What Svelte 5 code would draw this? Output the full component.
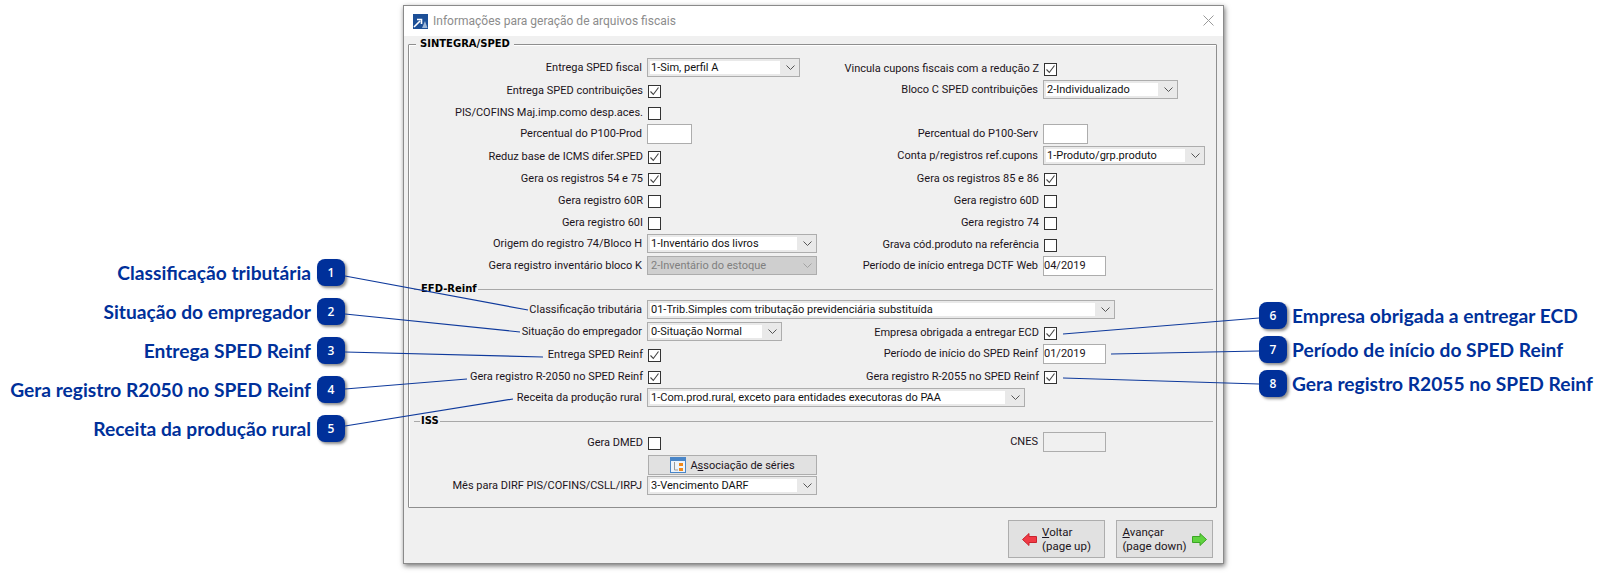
<script lang="ts">
	type Field =
		| { type: 'blank' }
		| { type: 'check'; label: string; checked?: boolean }
		| { type: 'select'; label: string; value: string; width: number; disabled?: boolean; wide?: boolean }
		| { type: 'input'; label: string; value?: string; width: number; off?: boolean };

	const blank: Field = { type: 'blank' };
	const check = (label: string, checked = false): Field => ({ type: 'check', label, checked });
	const select = (label: string, value: string, width: number, extra = {}): Field => ({
		type: 'select',
		label,
		value,
		width,
		...extra
	});
	const input = (label: string, width: number, value = '', off = false): Field => ({
		type: 'input',
		label,
		width,
		value,
		off
	});

	const sintegra: [Field, Field][] = [
		[select('Entrega SPED fiscal', '1-Sim, perfil A', 153), check('Vincula cupons fiscais com a redução Z', true)],
		[check('Entrega SPED contribuições', true), select('Bloco C SPED contribuições', '2-Individualizado', 135)],
		[check('PIS/COFINS Maj.imp.como desp.aces.'), blank],
		[input('Percentual do P100-Prod', 45), input('Percentual do P100-Serv', 45)],
		[check('Reduz base de ICMS difer.SPED', true), select('Conta p/registros ref.cupons', '1-Produto/grp.produto', 162)],
		[check('Gera os registros 54 e 75', true), check('Gera os registros 85 e 86', true)],
		[check('Gera registro 60R'), check('Gera registro 60D')],
		[check('Gera registro 60I'), check('Gera registro 74')],
		[select('Origem do registro 74/Bloco H', '1-Inventário dos livros', 170), check('Grava cód.produto na referência')],
		[
			select('Gera registro inventário bloco K', '2-Inventário do estoque', 170, { disabled: true }),
			input('Período de início entrega DCTF Web', 63, '04/2019')
		]
	];

	const reinf: [Field, Field][] = [
		[
			select('Classificação tributária', '01-Trib.Simples com tributação previdenciária substituída', 468, { wide: true }),
			blank
		],
		[select('Situação do empregador', '0-Situação Normal', 135), check('Empresa obrigada a entregar ECD', true)],
		[check('Entrega SPED Reinf', true), input('Período de início do SPED Reinf', 63, '01/2019')],
		[check('Gera registro R-2050 no SPED Reinf', true), check('Gera registro R-2055 no SPED Reinf', true)],
		[
			select('Receita da produção rural', '1-Com.prod.rural, exceto para entidades executoras do PAA', 378, { wide: true }),
			blank
		]
	];

	const leftNotes = [
		'Classificação tributária',
		'Situação do empregador',
		'Entrega SPED Reinf',
		'Gera registro R2050 no SPED Reinf',
		'Receita da produção rural'
	];
	const rightNotes = ['Empresa obrigada a entregar ECD', 'Período de início do SPED Reinf', 'Gera registro R2055 no SPED Reinf'];

	// leader lines from the numbered badges to their fields
	const leaders = [
		[345, 276, 528, 310],
		[345, 314, 520, 332],
		[345, 352, 543, 357],
		[345, 389, 467, 379],
		[345, 426, 513, 399],
		[1063, 334, 1259, 318],
		[1111, 354, 1259, 351],
		[1063, 378, 1259, 384]
	];
</script>

{#snippet chevron()}
	<svg class="chevron" width="9" height="5" viewBox="0 0 9 5" aria-hidden="true">
		<path d="M0.5 0.5 L4.5 4.5 L8.5 0.5" fill="none" stroke="currentColor" />
	</svg>
{/snippet}

{#snippet field(f: Field)}
	{#if f.type === 'check'}
		<span class="label label--check">{f.label}</span>
		<span class="control">
			<span class="check">
				{#if f.checked}
					<svg width="11" height="11" viewBox="0 0 11 11" aria-hidden="true">
						<path d="M1.5 5.5 L4.3 8.5 L9.5 1.5" fill="none" stroke="#444" stroke-width="1.1" />
					</svg>
				{/if}
			</span>
		</span>
	{:else if f.type === 'select'}
		<span class="label">{f.label}</span>
		<span class="control" class:control--wide={f.wide}>
			<span class="select" class:select--off={f.disabled} style="width: {f.width}px">
				<span class="select__value">{f.value}</span>
				<span class="select__arrow">{@render chevron()}</span>
			</span>
		</span>
	{:else if f.type === 'input'}
		<span class="label">{f.label}</span>
		<span class="control">
			<span class="input" class:input--off={f.off} style="width: {f.width}px">{f.value}</span>
		</span>
	{:else}
		<span></span>
		<span></span>
	{/if}
{/snippet}

<div class="page">
	<aside class="notes notes--left">
		{#each leftNotes as note, i}
			<div class="note">
				<span class="note__text">{note}</span>
				<span class="badge">{i + 1}</span>
			</div>
		{/each}
	</aside>

	<section class="dialog">
		<header class="titlebar">
			<svg class="titlebar__icon" width="15" height="15" viewBox="0 0 15 15" aria-hidden="true">
				<rect width="15" height="15" fill="#1c4f97" />
				<path d="M1 13 L7 7 M4 5.5 H8.5 V10" fill="none" stroke="#fff" stroke-width="1.6" />
				<path d="M9 14 L12 7 L14.5 14 Z" fill="#9db7d8" />
			</svg>
			<span class="titlebar__text">Informações para geração de arquivos fiscais</span>
			<svg class="titlebar__close" width="11" height="11" viewBox="0 0 11 11" aria-hidden="true">
				<path d="M0.5 0.5 L10.5 10.5 M10.5 0.5 L0.5 10.5" stroke="#9a9a9a" fill="none" />
			</svg>
		</header>

		<div class="body">
			<div class="group">
				<span class="legend legend--first">SINTEGRA/SPED</span>
				<div class="form">
					{#each sintegra as [a, b]}
						{@render field(a)}
						{@render field(b)}
					{/each}

					<div class="rule"><span class="legend">EFD-Reinf</span></div>
					{#each reinf as [a, b]}
						{@render field(a)}
						{@render field(b)}
					{/each}

					<div class="rule"><span class="legend">ISS</span></div>
					{@render field(check('Gera DMED'))}
					{@render field(input('CNES', 63, '', true))}

					<span></span>
					<span class="control">
						<span class="series">
							<svg width="16" height="16" viewBox="0 0 16 16" aria-hidden="true">
								<rect x="0.5" y="0.5" width="15" height="15" fill="#eef4fb" stroke="#4a86c8" />
								<rect x="1" y="1" width="14" height="3" fill="#4a86c8" />
								<path d="M4.5 5 V13 H8" fill="none" stroke="#9a9a9a" />
								<rect x="9" y="6" width="4" height="3" fill="#f0891c" />
								<rect x="9" y="11" width="4" height="3" fill="#f0891c" />
							</svg>
							<span>A<u>s</u>sociação de séries</span>
						</span>
					</span>
					<span></span>
					<span></span>

					{@render field(select('Mês para DIRF PIS/COFINS/CSLL/IRPJ', '3-Vencimento DARF', 170))}
					{@render field(blank)}
				</div>
			</div>

			<footer class="actions">
				<button class="nav">
					<svg width="15" height="13" viewBox="0 0 15 13" aria-hidden="true">
						<path d="M0.5 6.5 L7 0.5 V3.5 H14.5 V9.5 H7 V12.5 Z" fill="#f03a45" stroke="#c9242e" />
					</svg>
					<span class="nav__text"><span><u>V</u>oltar</span><span>(page up)</span></span>
				</button>
				<button class="nav">
					<span class="nav__text"><span><u>A</u>vançar</span><span>(page down)</span></span>
					<svg width="15" height="13" viewBox="0 0 15 13" aria-hidden="true">
						<path d="M14.5 6.5 L8 0.5 V3.5 H0.5 V9.5 H8 V12.5 Z" fill="#5fd33f" stroke="#3ba524" />
					</svg>
				</button>
			</footer>
		</div>
	</section>

	<aside class="notes notes--right">
		{#each rightNotes as note, i}
			<div class="note">
				<span class="badge">{i + 6}</span>
				<span class="note__text">{note}</span>
			</div>
		{/each}
	</aside>

	<svg class="leaders" width="1608" height="574" aria-hidden="true">
		{#each leaders as [x1, y1, x2, y2]}
			<line {x1} {y1} {x2} {y2} stroke="#0f3a9c" stroke-width="1.2" />
		{/each}
	</svg>
</div>

<style>
	:global(body) {
		margin: 0;
		background: #fff;
	}

	.page {
		position: relative;
		display: grid;
		grid-template-columns: 403px 821px 1fr;
		width: 1608px;
		height: 574px;
		overflow: hidden;
		font-family: Roboto, 'Liberation Sans', Arial, sans-serif;
	}

	.leaders {
		position: absolute;
		inset: 0;
		pointer-events: none;
	}

	/* callouts beside the window */
	.notes {
		display: flex;
		flex-direction: column;
	}
	.notes--left {
		padding: 259px 58px 0 0;
		gap: 12px;
		align-items: flex-end;
	}
	.notes--right {
		padding: 302px 0 0 35px;
		gap: 7px;
		align-items: flex-start;
	}
	.note {
		display: flex;
		align-items: center;
		height: 27px;
		gap: 6px;
		white-space: nowrap;
	}
	.notes--right .note {
		gap: 5px;
	}
	.note__text {
		font-family: Lato, 'Open Sans', sans-serif;
		font-weight: 700;
		font-size: 19.2px;
		color: #00309a;
	}
	.badge {
		display: flex;
		align-items: center;
		justify-content: center;
		width: 28px;
		height: 27px;
		border-radius: 8px;
		background: #00309a;
		color: #fff;
		font-family: 'Open Sans', sans-serif;
		font-weight: 600;
		font-size: 12px;
		box-shadow: 2px 2px 3px rgba(0, 0, 0, 0.45);
	}

	/* window */
	.dialog {
		display: flex;
		flex-direction: column;
		height: 559px;
		margin-top: 5px;
		box-sizing: border-box;
		border: 1px solid #8a8a8a;
		background: #f0f0f0;
		box-shadow: 1px 2px 5px rgba(0, 0, 0, 0.55);
		color: #1c1420;
		font-size: 11px;
	}
	.titlebar {
		display: flex;
		align-items: center;
		flex: none;
		height: 30px;
		padding: 0 9px;
		gap: 5px;
		background: #fff;
	}
	.titlebar__text {
		flex: 1;
		font-size: 12px;
		color: #8c8c8c;
	}
	.titlebar__close {
		margin-top: -2px;
	}
	.body {
		display: flex;
		flex-direction: column;
		flex: 1;
		padding: 8px 6px 5px 4px;
	}

	.group {
		position: relative;
		box-sizing: border-box;
		height: 464px;
		padding-top: 13px;
		border: 1px solid #8e8e8e;
		border-radius: 1px;
		box-shadow: inset 1px 1px 0 #fff;
	}
	.legend {
		padding: 0 4px;
		background: #f0f0f0;
		color: #000;
		font-family: 'DejaVu Sans', sans-serif;
		font-weight: 700;
		font-size: 10px;
		line-height: 12px;
	}
	.legend--first {
		position: absolute;
		top: -7px;
		left: 7px;
	}

	.form {
		display: grid;
		grid-template-columns: 238px 194px 202px 175px;
		grid-auto-rows: 22px;
	}
	.rule {
		grid-column: 1 / -1;
		display: flex;
		align-items: center;
		margin: 0 5px;
		position: relative;
	}
	.rule::before {
		content: '';
		flex: 1;
		height: 1px;
		background: #a8a8a8;
	}
	.rule .legend {
		position: absolute;
		left: 6px;
		padding: 0 1px;
	}

	.label {
		padding: 2px 5px 0 0;
		text-align: right;
		white-space: nowrap;
		line-height: 16px;
	}
	.label--check {
		padding: 3px 4px 0 0;
	}
	.control {
		position: relative;
		white-space: nowrap;
	}
	.control--wide {
		z-index: 1;
	}

	.check {
		display: flex;
		align-items: center;
		justify-content: center;
		box-sizing: border-box;
		width: 13px;
		height: 13px;
		margin: 5px 0 0 1px;
		border: 1px solid #333;
		background: #fff;
	}
	.select {
		display: flex;
		box-sizing: border-box;
		height: 19px;
		padding: 2px;
		border: 1px solid #adadad;
		background: #e9e9e9;
		line-height: 13px;
	}
	.select__value {
		flex: 1;
		padding-left: 1px;
		background: #fff;
		color: #111;
	}
	.select__arrow {
		display: flex;
		align-items: center;
		justify-content: center;
		flex: none;
		box-sizing: border-box;
		width: 17px;
		padding-left: 4px;
		color: #555;
	}
	.select--off {
		background: #cfcfcf;
	}
	.select--off .select__value {
		background: #cfcfcf;
		color: #7f7f7f;
	}
	.select--off .select__arrow {
		color: #a3a3a3;
	}
	.input {
		display: block;
		box-sizing: border-box;
		height: 20px;
		border: 1px solid #adadad;
		background: #fff;
		padding: 2px 0 0 0;
		line-height: 14px;
	}
	.input--off {
		background: #f0f0f0;
	}
	.series {
		display: flex;
		align-items: center;
		justify-content: center;
		box-sizing: border-box;
		gap: 4px;
		width: 169px;
		height: 20px;
		margin: 1px 0 0 1px;
		border: 1px solid #adadad;
		background: #e1e1e1;
	}

	.actions {
		display: flex;
		justify-content: flex-end;
		gap: 11px;
		margin-top: 12px;
		padding-right: 4px;
	}
	.nav {
		display: flex;
		align-items: center;
		justify-content: center;
		gap: 5px;
		box-sizing: border-box;
		width: 97px;
		height: 38px;
		padding: 0;
		border: 1px solid #adadad;
		background: #e1e1e1;
		color: #1c1420;
		font-family: Roboto, 'Liberation Sans', Arial, sans-serif;
		font-size: 11.5px;
		text-align: left;
	}
	.nav__text {
		display: flex;
		flex-direction: column;
		line-height: 14px;
	}
</style>
